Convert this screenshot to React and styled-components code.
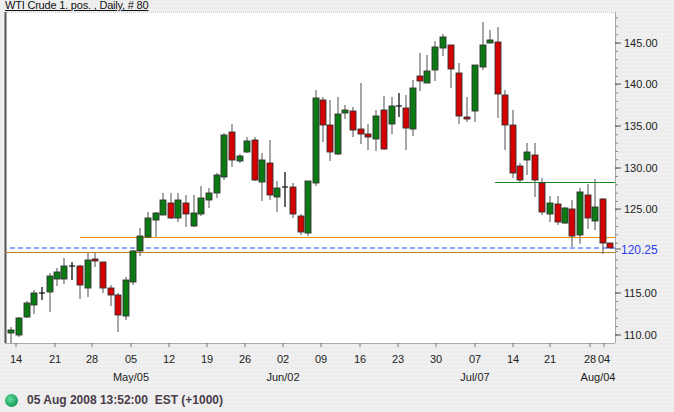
import React from "react";
import styled, { createGlobalStyle } from "styled-components";

const Global = createGlobalStyle`
  html, body { margin: 0; padding: 0; }
  body { width: 674px; height: 412px; overflow: hidden; background: #ededed; font-family: "Liberation Sans", Arial, sans-serif; }
`;

const Page = styled.div`
  width: 674px; height: 412px; display: flex; flex-direction: column;
  background-color: #ededed;
  background-image: radial-gradient(#f8f8f8 0.6px, transparent 0.8px);
  background-size: 4px 4px;
`;
const Title = styled.div`
  height: 12px; padding-left: 5px; font-size: 11px; line-height: 11px; color: #111;
  text-decoration: underline; letter-spacing: -0.2px;
`;
const ChartSvg = styled.svg` display: block; `;
const Status = styled.div`
  display: flex; align-items: center; gap: 9px; padding: 6px 0 0 5px;
  font-size: 12px; font-weight: bold; color: #4a3c4a;
`;
const Dot = styled.span`
  width: 13px; height: 13px; border-radius: 50%;
  background: radial-gradient(circle at 40% 40%, #5fe0a0, #1a9a5a 70%, #0d6b3c);
`;

// [x, open, close, high, low] in pixel y (open->close orientation by color)
const C = [
[11,'g',330,333,327,343],[19,'g',318,335,317,337],[27,'g',303,317,301,318],[34,'g',293,305,290,314],
[42,'x',293,293,287,300],[50,'g',276,292,273,312],[57,'g',272,279,268,286],[64,'g',266,279,258,284],
[72,'x',266,266,262,280],[80,'r',266,285,265,299],[88,'g',260,288,253,297],[95,'r',259,261,253,267],
[103,'r',262,288,262,293],[111,'r',288,295,285,306],[118,'r',295,315,293,332],[126,'g',280,316,277,320],
[133,'g',251,282,250,285],[140,'g',236,251,228,256],[148,'g',218,237,212,238],[156,'g',213,220,212,237],
[163,'g',200,215,193,215],[171,'r',203,218,193,219],[178,'g',200,218,193,222],[186,'r',203,214,195,227],
[194,'g',213,226,195,227],[201,'g',198,214,186,216],[209,'g',193,200,188,208],[217,'g',175,193,173,198],
[224,'g',135,177,133,180],[232,'r',132,160,124,167],[240,'g',156,161,154,163],[247,'g',141,152,137,153],
[255,'r',140,180,137,181],[262,'g',160,182,153,201],[270,'r',163,195,140,200],[277,'g',188,197,181,212],
[285,'x',187,187,172,207],[293,'r',187,214,183,218],[301,'r',216,232,214,235],[308,'g',181,233,181,236],
[316,'g',98,183,90,186],[323,'r',100,125,97,142],[330,'r',125,152,100,161],[338,'g',114,154,97,155],
[345,'g',110,113,105,119],[353,'r',111,130,107,137],[361,'r',129,134,83,144],[368,'r',134,137,124,150],
[376,'g',116,139,110,151],[384,'r',110,149,96,150],[392,'g',106,124,97,134],[399,'x',106,106,93,117],
[406,'r',108,128,95,150],[413,'g',88,129,80,136],[420,'r',76,81,53,91],[427,'g',71,83,55,81],
[435,'g',47,70,41,81],[443,'g',37,48,34,56],[451,'r',45,69,45,88],[459,'r',73,116,63,124],
[467,'r',117,119,97,122],[475,'g',65,111,65,122],[483,'g',45,67,22,70],[490,'g',40,43,30,43],
[498,'r',42,94,27,118],[505,'r',95,125,90,150],[513,'r',125,173,110,178],[520,'r',166,180,163,182],
[527,'g',152,160,143,175],[535,'r',155,180,143,197],[542,'r',183,212,178,215],[550,'g',203,214,196,222],
[558,'r',204,222,196,225],[565,'g',208,223,207,224],[572,'r',209,236,200,247],[580,'g',192,235,188,244],
[588,'r',195,218,184,229],[595,'g',207,221,179,230],[603,'r',199,243,198,254],[610,'r',243,248,243,248],
];

const prices = [["145.00",43],["140.00",84],["135.00",126],["130.00",168],["125.00",209],["115.00",293],["110.00",335]];
const days = [["14",16],["21",55],["28",92],["05",131],["12",169],["19",207],["26",245],["02",283],["09",321],["16",360],["23",398],["30",436],["07",475],["14",513],["21",550],["28",590],["04",604]];
const months = [["May/05",131],["Jun/02",283],["Jul/07",475],["Aug/04",598]];

function Candle({ c }) {
  const [x, t, a, b, h, l] = c;
  const fill = t === 'g' ? '#0b7a12' : t === 'r' ? '#d40000' : '#222';
  return (
    <g>
      <line x1={x} x2={x} y1={h} y2={l} stroke={t === 'x' ? '#111' : '#777'} strokeWidth="1.3" />
      {t === 'x'
        ? <line x1={x - 3} x2={x + 3} y1={a} y2={a} stroke="#111" strokeWidth="1.2" />
        : <rect x={x - 3} y={a} width={6} height={Math.max(b - a, 2)} fill={fill} stroke="#333" strokeWidth="0.9" />}
    </g>
  );
}

export default function App() {
  const minor = [];
  for (let y = 43 - 8.34 * 4; y < 343; y += 8.34) minor.push(y);
  return (
    <Page>
      <Global />
      <Title>WTI Crude 1. pos. , Daily, # 80</Title>
      <ChartSvg width="674" height="375" viewBox="0 12 674 375">
        <rect x="5" y="12" width="610" height="331" fill="#fff" />
        <line x1="5" x2="615" y1="12" y2="12" stroke="#999" strokeDasharray="1 1" />
        <line x1="5.5" x2="5.5" y1="12" y2="343" stroke="#555" strokeWidth="2" />
        <line x1="615.5" x2="615.5" y1="12" y2="343" stroke="#aaa" />
        <line x1="5" x2="615" y1="343.5" y2="343.5" stroke="#aaa" />
        <line x1="495" x2="615" y1="182.5" y2="182.5" stroke="#168a16" />
        <line x1="80" x2="615" y1="237.5" y2="237.5" stroke="#f29000" />
        <line x1="5" x2="615" y1="252.5" y2="252.5" stroke="#c07818" />
        <line x1="10" x2="615" y1="248" y2="248" stroke="#3050f0" strokeDasharray="5 3" />
        {C.map((c, i) => <Candle key={i} c={c} />)}
        {minor.map((y, i) => <line key={i} x1="615" x2="618" y1={y} y2={y} stroke="#888" />)}
        {prices.map(([p, y]) => (
          <g key={p}>
            <line x1="615" x2="621" y1={y} y2={y} stroke="#555" />
            <text x="624" y={y + 4} fontSize="11" fill="#222" fontFamily="Liberation Sans">{p}</text>
          </g>
        ))}
        <line x1="615" x2="621" y1="249" y2="249" stroke="#555" />
        <text x="621" y="254" fontSize="12" fill="#2a3cf0" fontFamily="Liberation Sans">120.25</text>
        {days.map(([d, x], i) => (
          <g key={i}>
            <line x1={x} x2={x} y1="343" y2="347" stroke="#777" />
            <text x={x} y="363" fontSize="11" textAnchor="middle" fill="#222" fontFamily="Liberation Sans">{d}</text>
          </g>
        ))}
        {months.map(([m, x]) => (
          <text key={m} x={x} y="381" fontSize="11" textAnchor="middle" fill="#222" fontFamily="Liberation Sans">{m}</text>
        ))}
      </ChartSvg>
      <Status><Dot />05 Aug 2008 13:52:00&nbsp; EST (+1000)</Status>
    </Page>
  );
}
